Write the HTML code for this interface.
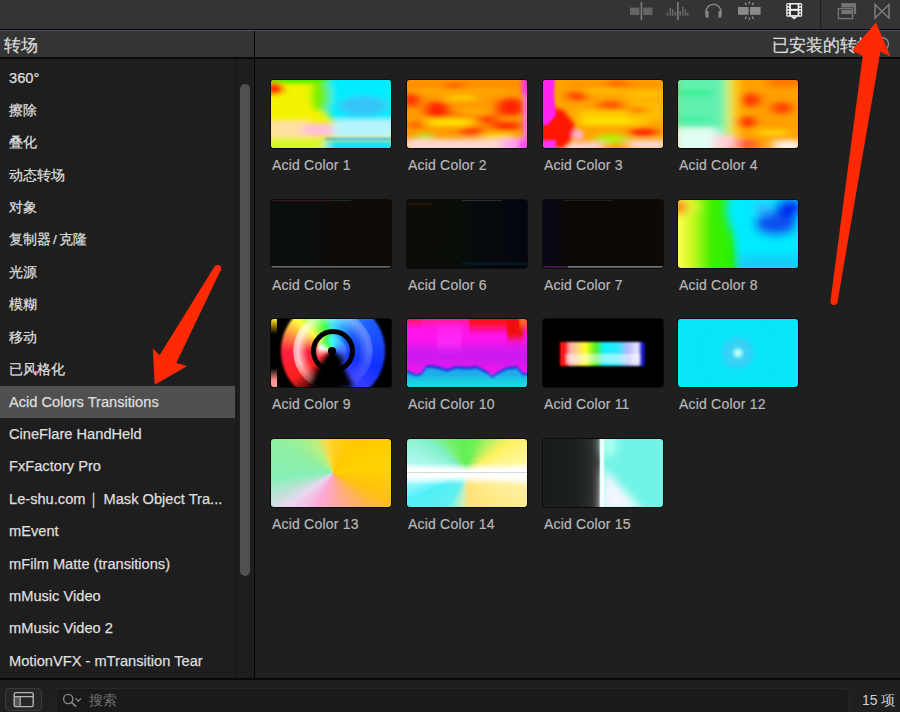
<!DOCTYPE html>
<html><head><meta charset="utf-8">
<style>
*{margin:0;padding:0;box-sizing:border-box}
html,body{width:900px;height:712px;overflow:hidden;background:#1f1f1f;font-family:"Liberation Sans",sans-serif}
.abs{position:absolute}
#toolbar{left:0;top:0;width:900px;height:29px;background:#343434}
#tl1{left:0;top:29px;width:900px;height:1px;background:#06061a}
#tl2{left:0;top:30px;width:900px;height:1px;background:#50506e}
#hdr{left:0;top:31px;width:900px;height:26px;background:#343434}
#hl{left:0;top:57px;width:900px;height:2px;background:#080808}
#vdiv{left:254px;top:31px;width:1px;height:647px;background:#050505}
#side{left:0;top:59px;width:254px;height:619px;background:#1e1e1e}
#track{left:236px;top:59px;width:18px;height:619px;background:#1e1e1e;border-left:1px solid #171717}
#thumb{left:240px;top:84px;width:10px;height:492px;border-radius:5px;background:#515151}
#main{left:255px;top:59px;width:645px;height:619px;background:#1f1f1f}
#bl{left:0;top:678px;width:900px;height:2px;background:#080808}
#bottom{left:0;top:680px;width:900px;height:32px;background:#1f1f1f}
.item{position:absolute;left:9px;font-size:14.65px;line-height:20px;color:#dedede;white-space:nowrap;-webkit-text-stroke:0.25px #dedede}
.sel{position:absolute;left:0;top:386px;width:235px;height:32px;background:#505050}
.th{position:absolute;width:120px;height:68px;border-radius:3px;overflow:hidden;box-shadow:0 0 0 1px #0c0c0c}
.th svg{display:block}
.lab{position:absolute;font-size:14px;line-height:20px;color:#b8b8b8;white-space:nowrap;letter-spacing:0.2px;-webkit-text-stroke:0.2px #b8b8b8}
</style></head><body>
<div class="abs" id="toolbar"></div>
<div class="abs" id="tl1"></div>
<div class="abs" id="tl2"></div>
<div class="abs" id="hdr"></div>
<div class="abs" id="hl"></div>
<div class="abs" id="side"></div>
<div class="abs" id="track"></div>
<div class="abs" id="thumb"></div>
<div class="abs" id="main"></div>
<div class="abs" id="vdiv"></div>
<div class="abs" id="bl"></div>
<div class="abs" id="bottom"></div>

<svg class="abs" style="left:0;top:0" width="900" height="29" viewBox="0 0 900 29">
<g fill="#646464">
<rect x="630" y="7.6" width="9.4" height="7.4"/>
<rect x="643.2" y="7.6" width="9.2" height="7.4"/>
<rect x="640.6" y="2" width="1.6" height="18.2" fill="#7a7a7a"/>
</g>
<g fill="#686868">
<rect x="666.8" y="12.6" width="1.5" height="3.2"/>
<rect x="669.6" y="8" width="1.5" height="7.8"/>
<rect x="671.9" y="9.2" width="1.5" height="6.6"/>
<rect x="674.6" y="11.8" width="1.5" height="4"/>
<rect x="677" y="2" width="1.7" height="18" fill="#7a7a7a"/>
<rect x="679.5" y="11.2" width="1.5" height="4.6"/>
<rect x="682" y="7" width="1.5" height="8.8"/>
<rect x="684.6" y="9.4" width="1.5" height="6.4"/>
<rect x="686.9" y="12.6" width="1.5" height="3.2"/>
</g>
<g fill="none" stroke="#858585" stroke-width="1.5">
<path d="M706,15 L706,12 A7.5,7.8 0 0 1 721,12 L721,15"/>
</g>
<g fill="#858585">
<rect x="705.6" y="11" width="3" height="6.8" rx="1"/>
<rect x="718.4" y="11" width="3" height="6.8" rx="1"/>
</g>
<g fill="#8a8a8a">
<rect x="738" y="7" width="10.6" height="7.8"/>
<rect x="750" y="7" width="10.6" height="7.8"/>
</g>
<g stroke="#9a9a9a" stroke-width="1.2" stroke-linecap="round">
<path d="M749.3,1.8 L749.3,3.6 M745.3,3 L746.2,4.6 M753.3,3 L752.4,4.6 M749.3,17.8 L749.3,19.6 M745.3,18.6 L746.2,17 M753.3,18.6 L752.4,17"/>
</g>
<g>
<rect x="786.2" y="2.9" width="16" height="13.8" rx="1.5" fill="#ececec"/>
<path d="M790.5,16.5 L797.8,16.5 L794.2,19.6Z" fill="#ececec"/>
<g fill="#2a2a2a">
<circle cx="788.3" cy="5.2" r="0.9"/><circle cx="788.3" cy="8.3" r="0.9"/><circle cx="788.3" cy="11.4" r="0.9"/><circle cx="788.3" cy="14.5" r="0.9"/>
<circle cx="800.1" cy="5.2" r="0.9"/><circle cx="800.1" cy="8.3" r="0.9"/><circle cx="800.1" cy="11.4" r="0.9"/><circle cx="800.1" cy="14.5" r="0.9"/>
<rect x="791" y="4.6" width="6.6" height="4.2"/>
<rect x="791" y="10.9" width="6.6" height="4.2"/>
</g>
</g>
<rect x="820" y="0" width="1.2" height="29" fill="#202020"/>
<g>
<rect x="841.3" y="3.1" width="14.8" height="10.9" fill="#747474"/>
<rect x="837" y="7.4" width="17" height="12.4" fill="#343434"/>
<rect x="838.4" y="8.6" width="14.2" height="10" fill="none" stroke="#747474" stroke-width="1.4"/>
<rect x="841.3" y="10" width="10.6" height="4" fill="#747474"/>
</g>
<g fill="none" stroke="#7c7c7c" stroke-width="1.5" stroke-linejoin="miter">
<path d="M875,4.5 L875,18 L889,4.5 L889,18 Z"/>
</g>
</svg>
<!-- header text -->
<div class="abs" style="left:4px;top:34.8px;font-size:16.5px;line-height:20px;color:#dedede;-webkit-text-stroke:0.2px #dedede">转场</div>
<div class="abs" style="left:771.5px;top:34.8px;font-size:16.5px;line-height:20px;color:#dedede;-webkit-text-stroke:0.2px #dedede">已安装的转场</div>

<!-- sidebar -->
<div class="sel"></div>
<div class="item" style="top:68.0px">360°</div>
<div class="item" style="top:101.0px;font-size:13.5px">擦除</div>
<div class="item" style="top:133.3px;font-size:13.5px">叠化</div>
<div class="item" style="top:165.7px;font-size:13.5px">动态转场</div>
<div class="item" style="top:198.1px;font-size:13.5px">对象</div>
<div class="item" style="top:230.4px;font-size:13.5px">复制器<span style="margin:0 2px">/</span>克隆</div>
<div class="item" style="top:262.8px;font-size:13.5px">光源</div>
<div class="item" style="top:295.2px;font-size:13.5px">模糊</div>
<div class="item" style="top:327.6px;font-size:13.5px">移动</div>
<div class="item" style="top:359.9px;font-size:13.5px">已风格化</div>
<div class="item" style="top:391.7px">Acid Colors Transitions</div>
<div class="item" style="top:424.1px">CineFlare HandHeld</div>
<div class="item" style="top:456.4px">FxFactory Pro</div>
<div class="item" style="top:488.8px">Le-shu.com<span style="margin:0 2.5px 0 0.5px">｜</span>Mask Object Tra...</div>
<div class="item" style="top:521.2px">mEvent</div>
<div class="item" style="top:553.5px">mFilm Matte (transitions)</div>
<div class="item" style="top:585.9px">mMusic Video</div>
<div class="item" style="top:618.3px">mMusic Video 2</div>
<div class="item" style="top:650.7px">MotionVFX - mTransition Tear</div>

<!-- grid -->
<div class="th" style="left:271px;top:80px"><svg width="120" height="68" viewBox="0 0 120 68"><defs>
<filter id="b1" filterUnits="userSpaceOnUse" x="-20" y="-20" width="160" height="108"><feGaussianBlur stdDeviation="1"/></filter>
<filter id="b2" filterUnits="userSpaceOnUse" x="-20" y="-20" width="160" height="108"><feGaussianBlur stdDeviation="2"/></filter>
<filter id="b3" filterUnits="userSpaceOnUse" x="-20" y="-20" width="160" height="108"><feGaussianBlur stdDeviation="3.5"/></filter>
<filter id="b5" filterUnits="userSpaceOnUse" x="-20" y="-20" width="160" height="108"><feGaussianBlur stdDeviation="5"/></filter>
<filter id="bv" filterUnits="userSpaceOnUse" x="-20" y="-20" width="160" height="108"><feGaussianBlur stdDeviation="1.2 4"/></filter>
<filter id="bt1" filterUnits="userSpaceOnUse" x="-20" y="-20" width="160" height="108"><feGaussianBlur stdDeviation="4.5 2.5"/></filter>
<filter id="bh" filterUnits="userSpaceOnUse" x="-20" y="-20" width="160" height="108"><feGaussianBlur stdDeviation="6 2.6"/></filter>
<linearGradient id="rb" x1="0" x2="1" y1="0" y2="0">
<stop offset="0" stop-color="#ff1010"/><stop offset=".06" stop-color="#ff1818"/><stop offset=".12" stop-color="#ffb0b0"/><stop offset=".2" stop-color="#ffd080"/>
<stop offset=".3" stop-color="#ffff20"/><stop offset=".42" stop-color="#50f020"/><stop offset=".52" stop-color="#10f0ff"/>
<stop offset=".68" stop-color="#30e8ff"/><stop offset=".8" stop-color="#b8b8ff"/><stop offset=".92" stop-color="#e8e8ff"/><stop offset=".95" stop-color="#3030e0"/><stop offset="1" stop-color="#0808a0"/></linearGradient>
<linearGradient id="g8" x1="0" x2="1"><stop offset="0" stop-color="#ffff50"/><stop offset=".12" stop-color="#c8f820"/><stop offset=".28" stop-color="#40f000"/><stop offset=".45" stop-color="#28f000"/><stop offset=".55" stop-color="#00f0f0"/><stop offset="1" stop-color="#10c8ff"/></linearGradient>
<linearGradient id="g5" x1="0" x2="1"><stop offset="0" stop-color="#0a0e0e"/><stop offset=".35" stop-color="#0b0e0c"/><stop offset=".55" stop-color="#0e0a08"/><stop offset="1" stop-color="#0d0a08"/></linearGradient>
<linearGradient id="g6" x1="0" x2="1"><stop offset="0" stop-color="#0c0c08"/><stop offset=".4" stop-color="#0a0e08"/><stop offset=".6" stop-color="#060a0c"/><stop offset="1" stop-color="#04060e"/></linearGradient>
<linearGradient id="g7" x1="0" x2="1"><stop offset="0" stop-color="#0a0616"/><stop offset=".12" stop-color="#0c0810"/><stop offset=".25" stop-color="#0d0806"/><stop offset="1" stop-color="#0c0906"/></linearGradient>
<radialGradient id="c12"><stop offset="0" stop-color="#d0fff0"/><stop offset=".14" stop-color="#90f4f8"/><stop offset=".3" stop-color="#40d4f4"/><stop offset=".6" stop-color="#30d0f6"/><stop offset="1" stop-color="#08e6fa" stop-opacity="0"/></radialGradient>
<linearGradient id="g15" x1="0" x2="1"><stop offset="0" stop-color="#171b1b"/><stop offset=".6" stop-color="#1c2020"/><stop offset=".85" stop-color="#2c2e2e"/><stop offset="1" stop-color="#4a4a4a"/></linearGradient>
</defs>
<rect width="120" height="68" fill="#f4f400"/>
<g filter="url(#bt1)">
<path d="M58,-5 C54,10 52,22 56,32 C58,38 62,42 64,48 L130,48 L130,-5Z" fill="#00ecff"/>
<rect x="-5" y="-5" width="64" height="8" fill="#38f000"/>
<ellipse cx="50" cy="16" rx="9" ry="16" fill="#70f000"/>
<ellipse cx="3" cy="8" rx="8" ry="6" fill="#ff1800"/>
<ellipse cx="92" cy="26" rx="24" ry="10" fill="#34c4f6"/>
<rect x="-5" y="40" width="45" height="18" fill="#ffe0a0"/>
<ellipse cx="50" cy="50" rx="20" ry="7" fill="#ffc0d8"/>
<rect x="62" y="40" width="63" height="18" fill="#b8f4ff"/>
<rect x="-5" y="59" width="60" height="15" fill="#d8f820"/>
<rect x="55" y="60" width="70" height="14" fill="#18e0f8"/>
</g>
<g filter="url(#b1)">
<rect x="54" y="58" width="71" height="1.8" fill="#3898f0" opacity=".85"/>
</g></svg></div>
<div class="lab" style="left:272px;top:155px">Acid Color 1</div>
<div class="th" style="left:407px;top:80px"><svg width="120" height="68" viewBox="0 0 120 68">
<rect width="120" height="68" fill="#ff9a00"/>
<g filter="url(#bh)">
<rect x="-5" y="2" width="130" height="5" fill="#ff8800"/>
<ellipse cx="4" cy="20" rx="8" ry="7" fill="#ff2400"/>
<ellipse cx="30" cy="30" rx="11" ry="9" fill="#ff1c00"/>
<rect x="40" y="16" width="30" height="4" fill="#ffe000"/>
<rect x="20" y="39" width="45" height="7" fill="#ffe800"/>
<rect x="10" y="9" width="90" height="3" fill="#ffb000"/>
<rect x="40" y="33" width="55" height="2.5" fill="#ff4000"/>
<ellipse cx="104" cy="27" rx="14" ry="9" fill="#ff2000"/>
<ellipse cx="100" cy="46" rx="16" ry="4" fill="#ff2800"/>
<ellipse cx="65" cy="51" rx="12" ry="5" fill="#ff4000"/>
<ellipse cx="48" cy="6" rx="10" ry="3" fill="#ff4800"/>
<ellipse cx="80" cy="40" rx="12" ry="3" fill="#ff3000"/>
<ellipse cx="10" cy="45" rx="10" ry="3" fill="#ff5000"/>
<rect x="55" y="30" width="25" height="4" fill="#ffc000"/>
<rect x="75" y="54" width="30" height="4" fill="#ffe800"/>
<ellipse cx="18" cy="56" rx="9" ry="3" fill="#b0f000"/>
<rect x="-5" y="59" width="100" height="15" fill="#ffd8d0"/>
<rect x="95" y="58" width="30" height="15" fill="#ffa0f0"/>
</g>
<g filter="url(#b2)">
<rect x="115" y="-5" width="10" height="20" fill="#ff30f0"/>
<rect x="116" y="15" width="8" height="45" fill="#ff70e0"/>
<rect x="112" y="60" width="12" height="12" fill="#ff50f0"/>
</g></svg></div>
<div class="lab" style="left:408px;top:155px">Acid Color 2</div>
<div class="th" style="left:543px;top:80px"><svg width="120" height="68" viewBox="0 0 120 68">
<rect width="120" height="68" fill="#ffa400"/>
<g filter="url(#bh)">
<rect x="25" y="2" width="95" height="6" fill="#ff9000"/>
<ellipse cx="34" cy="16" rx="10" ry="5" fill="#ff3800"/>
<ellipse cx="68" cy="26" rx="14" ry="5" fill="#ff5000"/>
<rect x="40" y="8" width="40" height="5" fill="#ffc000"/>
<rect x="35" y="30" width="70" height="16" fill="#ffcc00"/>
<rect x="40" y="38" width="50" height="6" fill="#ffe400"/>
<rect x="85" y="10" width="35" height="30" fill="#ffc000"/>
<ellipse cx="100" cy="52" rx="14" ry="5" fill="#ff2800"/>
<ellipse cx="75" cy="4" rx="12" ry="3" fill="#ff5000"/>
<ellipse cx="95" cy="30" rx="10" ry="3" fill="#ff6000"/>
<ellipse cx="68" cy="59" rx="16" ry="5" fill="#b8f000"/>
<rect x="85" y="18" width="35" height="5" fill="#ffb000"/>
<rect x="20" y="62" width="40" height="10" fill="#ffd0d8"/>
<rect x="85" y="60" width="40" height="10" fill="#ffd8d0"/>
</g>
<g filter="url(#b2)">
<path d="M-5,25 L20,30 L32,45 L30,58 L20,68 L-5,68Z" fill="#ff1400"/>
<ellipse cx="35" cy="55" rx="6" ry="6" fill="#ffb0c0"/>
</g>
<g filter="url(#b1)">
<path d="M-5,-5 L12,-5 L11,15 L13,35 L5,45 L-5,45Z" fill="#ff20f0"/>
<rect x="-5" y="60" width="18" height="14" fill="#ff30f0"/>
</g></svg></div>
<div class="lab" style="left:544px;top:155px">Acid Color 3</div>
<div class="th" style="left:678px;top:80px"><svg width="120" height="68" viewBox="0 0 120 68">
<rect width="120" height="68" fill="#ffa000"/>
<g filter="url(#bh)">
<rect x="-5" y="-5" width="56" height="60" fill="#60f0b0"/>
<rect x="-5" y="10" width="40" height="6" fill="#30f090"/>
<rect x="-5" y="36" width="35" height="6" fill="#40f0a0"/>
<rect x="-5" y="48" width="45" height="25" fill="#e0fff4"/>
<rect x="36" y="55" width="22" height="15" fill="#ffd0d8"/>
<rect x="50" y="-5" width="8" height="60" fill="#fff000"/>
<ellipse cx="72" cy="20" rx="10" ry="7" fill="#ff3000"/>
<ellipse cx="67" cy="42" rx="10" ry="6" fill="#ff2400"/>
<ellipse cx="104" cy="28" rx="10" ry="6" fill="#ff3800"/>
<rect x="80" y="50" width="30" height="5" fill="#ffe000"/>
<rect x="90" y="-5" width="35" height="12" fill="#ff7800"/>
<rect x="58" y="60" width="20" height="8" fill="#ff5040"/>
<rect x="95" y="60" width="30" height="12" fill="#fff0e0"/>
</g></svg></div>
<div class="lab" style="left:679px;top:155px">Acid Color 4</div>
<div class="th" style="left:271px;top:200px"><svg width="120" height="68" viewBox="0 0 120 68">
<rect width="120" height="68" fill="url(#g5)"/>
<rect x="0" y="0" width="60" height="1.2" fill="#5a1a3a" opacity=".6"/>
<rect x="60" y="0" width="20" height="1.2" fill="#1a4a2a" opacity=".6"/>
<rect x="0" y="66.3" width="120" height="1.2" fill="#8a8a8a"/></svg></div>
<div class="lab" style="left:272px;top:275px">Acid Color 5</div>
<div class="th" style="left:407px;top:200px"><svg width="120" height="68" viewBox="0 0 120 68">
<rect width="120" height="68" fill="url(#g6)"/>
<rect x="0" y="3" width="25" height="1.5" fill="#3a2010" opacity=".7"/>
<rect x="55" y="0" width="40" height="1" fill="#3a4a4a" opacity=".6"/>
<rect x="55" y="62" width="65" height="3" fill="#0a1a28" opacity=".8"/></svg></div>
<div class="lab" style="left:408px;top:275px">Acid Color 6</div>
<div class="th" style="left:543px;top:200px"><svg width="120" height="68" viewBox="0 0 120 68">
<rect width="120" height="68" fill="url(#g7)"/>
<rect x="20" y="0" width="50" height="1" fill="#303030" opacity=".6"/>
<rect x="0" y="66.3" width="25" height="1.2" fill="#602060"/>
<rect x="25" y="66.3" width="95" height="1.2" fill="#a0a0a0"/></svg></div>
<div class="lab" style="left:544px;top:275px">Acid Color 7</div>
<div class="th" style="left:678px;top:200px"><svg width="120" height="68" viewBox="0 0 120 68">
<rect width="120" height="68" fill="url(#g8)"/>
<g filter="url(#b5)">
<path d="M50,-5 C46,10 48,20 56,35 C58,45 60,55 62,75 L130,75 L130,-5Z" fill="#00ecff"/>
<ellipse cx="98" cy="24" rx="22" ry="12" fill="#0850f0"/>
<ellipse cx="112" cy="8" rx="15" ry="10" fill="#0028f0"/>
<ellipse cx="85" cy="8" rx="10" ry="5" fill="#30b0ff"/>
<rect x="60" y="56" width="70" height="15" fill="#18c8f8"/>
<ellipse cx="3" cy="7" rx="7" ry="5" fill="#ff2000"/>
<ellipse cx="15" cy="6" rx="8" ry="3" fill="#f8f040"/>
</g></svg></div>
<div class="lab" style="left:679px;top:275px">Acid Color 8</div>
<div class="th" style="left:271px;top:319px"><svg width="120" height="68" viewBox="0 0 120 68">
<rect width="120" height="68" fill="#000"/>
<g filter="url(#b2)">
<circle cx="62" cy="34" r="56" fill="none" stroke="url(#cw)" stroke-width="0"/>
</g>
<foreignObject x="0" y="0" width="120" height="68"><div style="width:120px;height:68px;position:relative;background:#000">
<div style="position:absolute;left:10px;top:-20px;width:104px;height:104px;border-radius:50%;background:conic-gradient(from 0deg,#40e0ff 0deg,#2060ff 50deg,#1030ff 110deg,#4040ff 150deg,#000 175deg,#000 205deg,#ff2020 235deg,#ff2040 270deg,#ffff40 310deg,#40ff40 340deg,#40e0ff 360deg);filter:blur(1px)"></div>
<div style="position:absolute;left:22px;top:-8px;width:80px;height:80px;border-radius:50%;background:radial-gradient(circle,rgba(255,255,255,0) 45%,rgba(255,255,255,.75) 62%,rgba(255,255,255,.3) 80%,rgba(255,255,255,0) 95%);-webkit-mask-image:conic-gradient(rgba(0,0,0,.5) 0deg,rgba(0,0,0,.35) 90deg,rgba(0,0,0,0) 160deg,rgba(0,0,0,0) 200deg,#000 250deg,#000 300deg,rgba(0,0,0,.6) 340deg,rgba(0,0,0,.5) 360deg)"></div>
<div style="position:absolute;left:40px;top:10px;width:44px;height:44px;border-radius:50%;border:5px solid #000;filter:blur(.5px)"></div>
<div style="position:absolute;left:46px;top:18px;width:30px;height:30px;border-radius:50%;background:conic-gradient(from 0deg,#40ffff 0deg,#4060ff 90deg,#000 160deg,#000 200deg,#ff4040 250deg,#ffffff 290deg,#40ff40 330deg,#40ffff 360deg);filter:blur(1px)"></div>
<div style="position:absolute;left:57px;top:28px;width:8px;height:8px;border-radius:50%;background:#000"></div>
<div style="position:absolute;left:0;top:0;width:120px;height:68px;filter:blur(2.5px)"><div style="width:120px;height:68px;background:#000;clip-path:polygon(58px 34px,65px 34px,84px 70px,38px 70px)"></div></div>
<div style="position:absolute;left:0;top:0;width:6px;height:68px;background:linear-gradient(#ffe840,#806000 12%,#000 22%,#000 72%,#ff9090 90%,#ffa0a0)"></div>
</div></foreignObject></svg></div>
<div class="lab" style="left:272px;top:394px">Acid Color 9</div>
<div class="th" style="left:407px;top:319px"><svg width="120" height="68" viewBox="0 0 120 68">
<rect width="120" height="68" fill="#ff14ec"/>
<g filter="url(#bv)">
<rect x="-5" y="-5" width="130" height="8" fill="#ff2060"/>
<rect x="62" y="-5" width="60" height="14" fill="#ff1010"/>
<rect x="100" y="-5" width="16" height="26" fill="#f01010"/>
<rect x="113" y="-5" width="10" height="10" fill="#ff8020"/>
<rect x="-5" y="-5" width="20" height="8" fill="#ff1818"/>
<rect x="-5" y="26" width="130" height="22" fill="#b820f0" opacity=".7"/>
<rect x="30" y="10" width="25" height="20" fill="#ff30f8" opacity=".6"/>
</g>
<g filter="url(#b1)">
<path d="M-5,51 L0,51 L8,55 L14,54 L20,46 L30,47 L40,50 L50,47 L60,48 L70,47 L80,52 L85,57 L92,52 L100,48 L110,47 L116,54 L125,54 L125,75 L-5,75Z" fill="#1838e0"/>
<path d="M-5,54 L0,54 L8,58 L14,57 L20,49 L30,50 L40,53 L50,50 L60,51 L70,50 L80,55 L85,60 L92,55 L100,51 L110,50 L116,57 L125,57 L125,75 L-5,75Z" fill="#20a8ec"/>
</g>
<g filter="url(#bv)">
<rect x="-5" y="60" width="130" height="12" fill="#14e0e0"/>
</g></svg></div>
<div class="lab" style="left:408px;top:394px">Acid Color 10</div>
<div class="th" style="left:543px;top:319px"><svg width="120" height="68" viewBox="0 0 120 68">
<rect width="120" height="68" fill="#000"/>
<g filter="url(#b1)">
<rect x="17" y="23" width="85" height="24" fill="url(#rb)"/>
<rect x="23" y="35" width="74" height="9" fill="#ffffff" opacity=".5"/>
</g></svg></div>
<div class="lab" style="left:544px;top:394px">Acid Color 11</div>
<div class="th" style="left:678px;top:319px"><svg width="120" height="68" viewBox="0 0 120 68">
<rect width="120" height="68" fill="#08e6fa"/>
<circle cx="60" cy="34" r="22" fill="url(#c12)"/>
<ellipse cx="60" cy="34" rx="39" ry="40" fill="none" stroke="#18d4f0" stroke-width="1" opacity=".5" filter="url(#b1)"/></svg></div>
<div class="lab" style="left:679px;top:394px">Acid Color 12</div>
<div class="th" style="left:271px;top:439px"><svg width="120" height="68" viewBox="0 0 120 68">
<foreignObject x="0" y="0" width="120" height="68"><div style="width:120px;height:68px;background:conic-gradient(from 0deg at 62px 34px,#ffd020 0deg,#ffc800 40deg,#ffd400 80deg,#ffc010 115deg,#ffb060 140deg,#ffa8a8 175deg,#ffa8d8 205deg,#e8d8f0 235deg,#88f0b8 265deg,#90f0a0 300deg,#b8f080 330deg,#ffd840 350deg,#ffd020 360deg)"></div></foreignObject></svg></div>
<div class="lab" style="left:272px;top:514px">Acid Color 13</div>
<div class="th" style="left:407px;top:439px"><svg width="120" height="68" viewBox="0 0 120 68">
<foreignObject x="0" y="0" width="120" height="68"><div style="width:120px;height:68px;position:relative;background:conic-gradient(from 0deg at 60px 34px,#66f058 0deg,#70f058 15deg,#b8f060 35deg,#fff060 55deg,#fff8a0 80deg,#ffffff 90deg,#fff0a0 105deg,#ffe880 140deg,#ffe078 175deg,#c8f0c0 190deg,#60f0f0 210deg,#50f0f8 245deg,#c0fcff 268deg,#ffffff 270deg,#b0f8f0 280deg,#80f0c8 310deg,#78f070 330deg,#66f058 345deg,#66f058 360deg)">
<div style="position:absolute;left:0;top:24px;width:120px;height:22px;background:linear-gradient(rgba(255,255,255,0),#fff 35%,#fff 60%,rgba(255,255,255,0))"></div>
<div style="position:absolute;left:0;top:33px;width:120px;height:1px;background:#d8d8d8"></div>
</div></foreignObject></svg></div>
<div class="lab" style="left:408px;top:514px">Acid Color 14</div>
<div class="th" style="left:543px;top:439px"><svg width="120" height="68" viewBox="0 0 120 68">
<rect width="120" height="68" fill="#181c1c"/>
<rect x="57" width="63" height="68" fill="#70f4e6"/>
<rect width="57" height="68" fill="url(#g15)"/>
<g filter="url(#b5)">
<path d="M60,28 L76,46 L100,72 L58,72Z" fill="#f6f6ff"/>
<ellipse cx="66" cy="6" rx="8" ry="12" fill="#b0fff0"/>
</g>
<g filter="url(#b1)">
<rect x="57" y="-5" width="4" height="80" fill="#ffffff"/>
</g></svg></div>
<div class="lab" style="left:544px;top:514px">Acid Color 15</div>

<!-- bottom bar -->
<div class="abs" style="left:5px;top:688px;width:37px;height:23px;border-radius:4px;background:#262626;border:1px solid #3c3c3c"></div>
<svg class="abs" style="left:0;top:680px" width="900" height="32" viewBox="0 0 900 32">
<rect x="14.5" y="17" width="5.5" height="9" fill="#555"/>
<rect x="14.2" y="12.6" width="19" height="14" rx="1.5" fill="none" stroke="#b4b4b4" stroke-width="1.4"/>
<path d="M14.2,16.7 L33.2,16.7 M20.2,16.7 L20.2,26.6" stroke="#b4b4b4" stroke-width="1.2"/>
<rect x="56" y="8.5" width="793" height="26" rx="4" fill="#1a1a1a" stroke="#282828" stroke-width="1"/>
<circle cx="68.2" cy="19" r="4.6" fill="none" stroke="#8c8c8c" stroke-width="1.4"/>
<path d="M71.6,22.5 L75.6,26.2" stroke="#8c8c8c" stroke-width="1.6" stroke-linecap="round"/>
<path d="M75.5,18.4 L78.3,21.2 L81.1,18.4" fill="none" stroke="#8c8c8c" stroke-width="1.2"/>
</svg>
<div class="abs" style="left:89px;top:690px;font-size:14px;line-height:20px;color:#6e6e6e">搜索</div>
<div class="abs" style="left:862px;top:690px;font-size:14px;line-height:20px;color:#d0d0d0">15 项</div>
<svg class="abs" style="left:870px;top:34px" width="24" height="22"><circle cx="12" cy="10" r="6.5" fill="none" stroke="#8a8a8a" stroke-width="1.4"/></svg>
<!-- arrows -->
<svg class="abs" style="left:0;top:0" width="900" height="712" viewBox="0 0 900 712">
<g fill="#ff2a04">
<path d="M876,22.5 L890.5,56.6 L880.4,51.6 L837.5,302 L830.5,301 L862.7,56 L852,50.3 Z"/>
<circle cx="834" cy="301.5" r="3.5"/>
<path d="M154.7,384.7 L152.8,348.3 L159.6,355.2 L214.5,266.5 L220.5,270.5 L176.3,363 L187.2,366 Z"/>
<circle cx="217.6" cy="268.5" r="3.6"/>
</g>
</svg>
</body></html>
